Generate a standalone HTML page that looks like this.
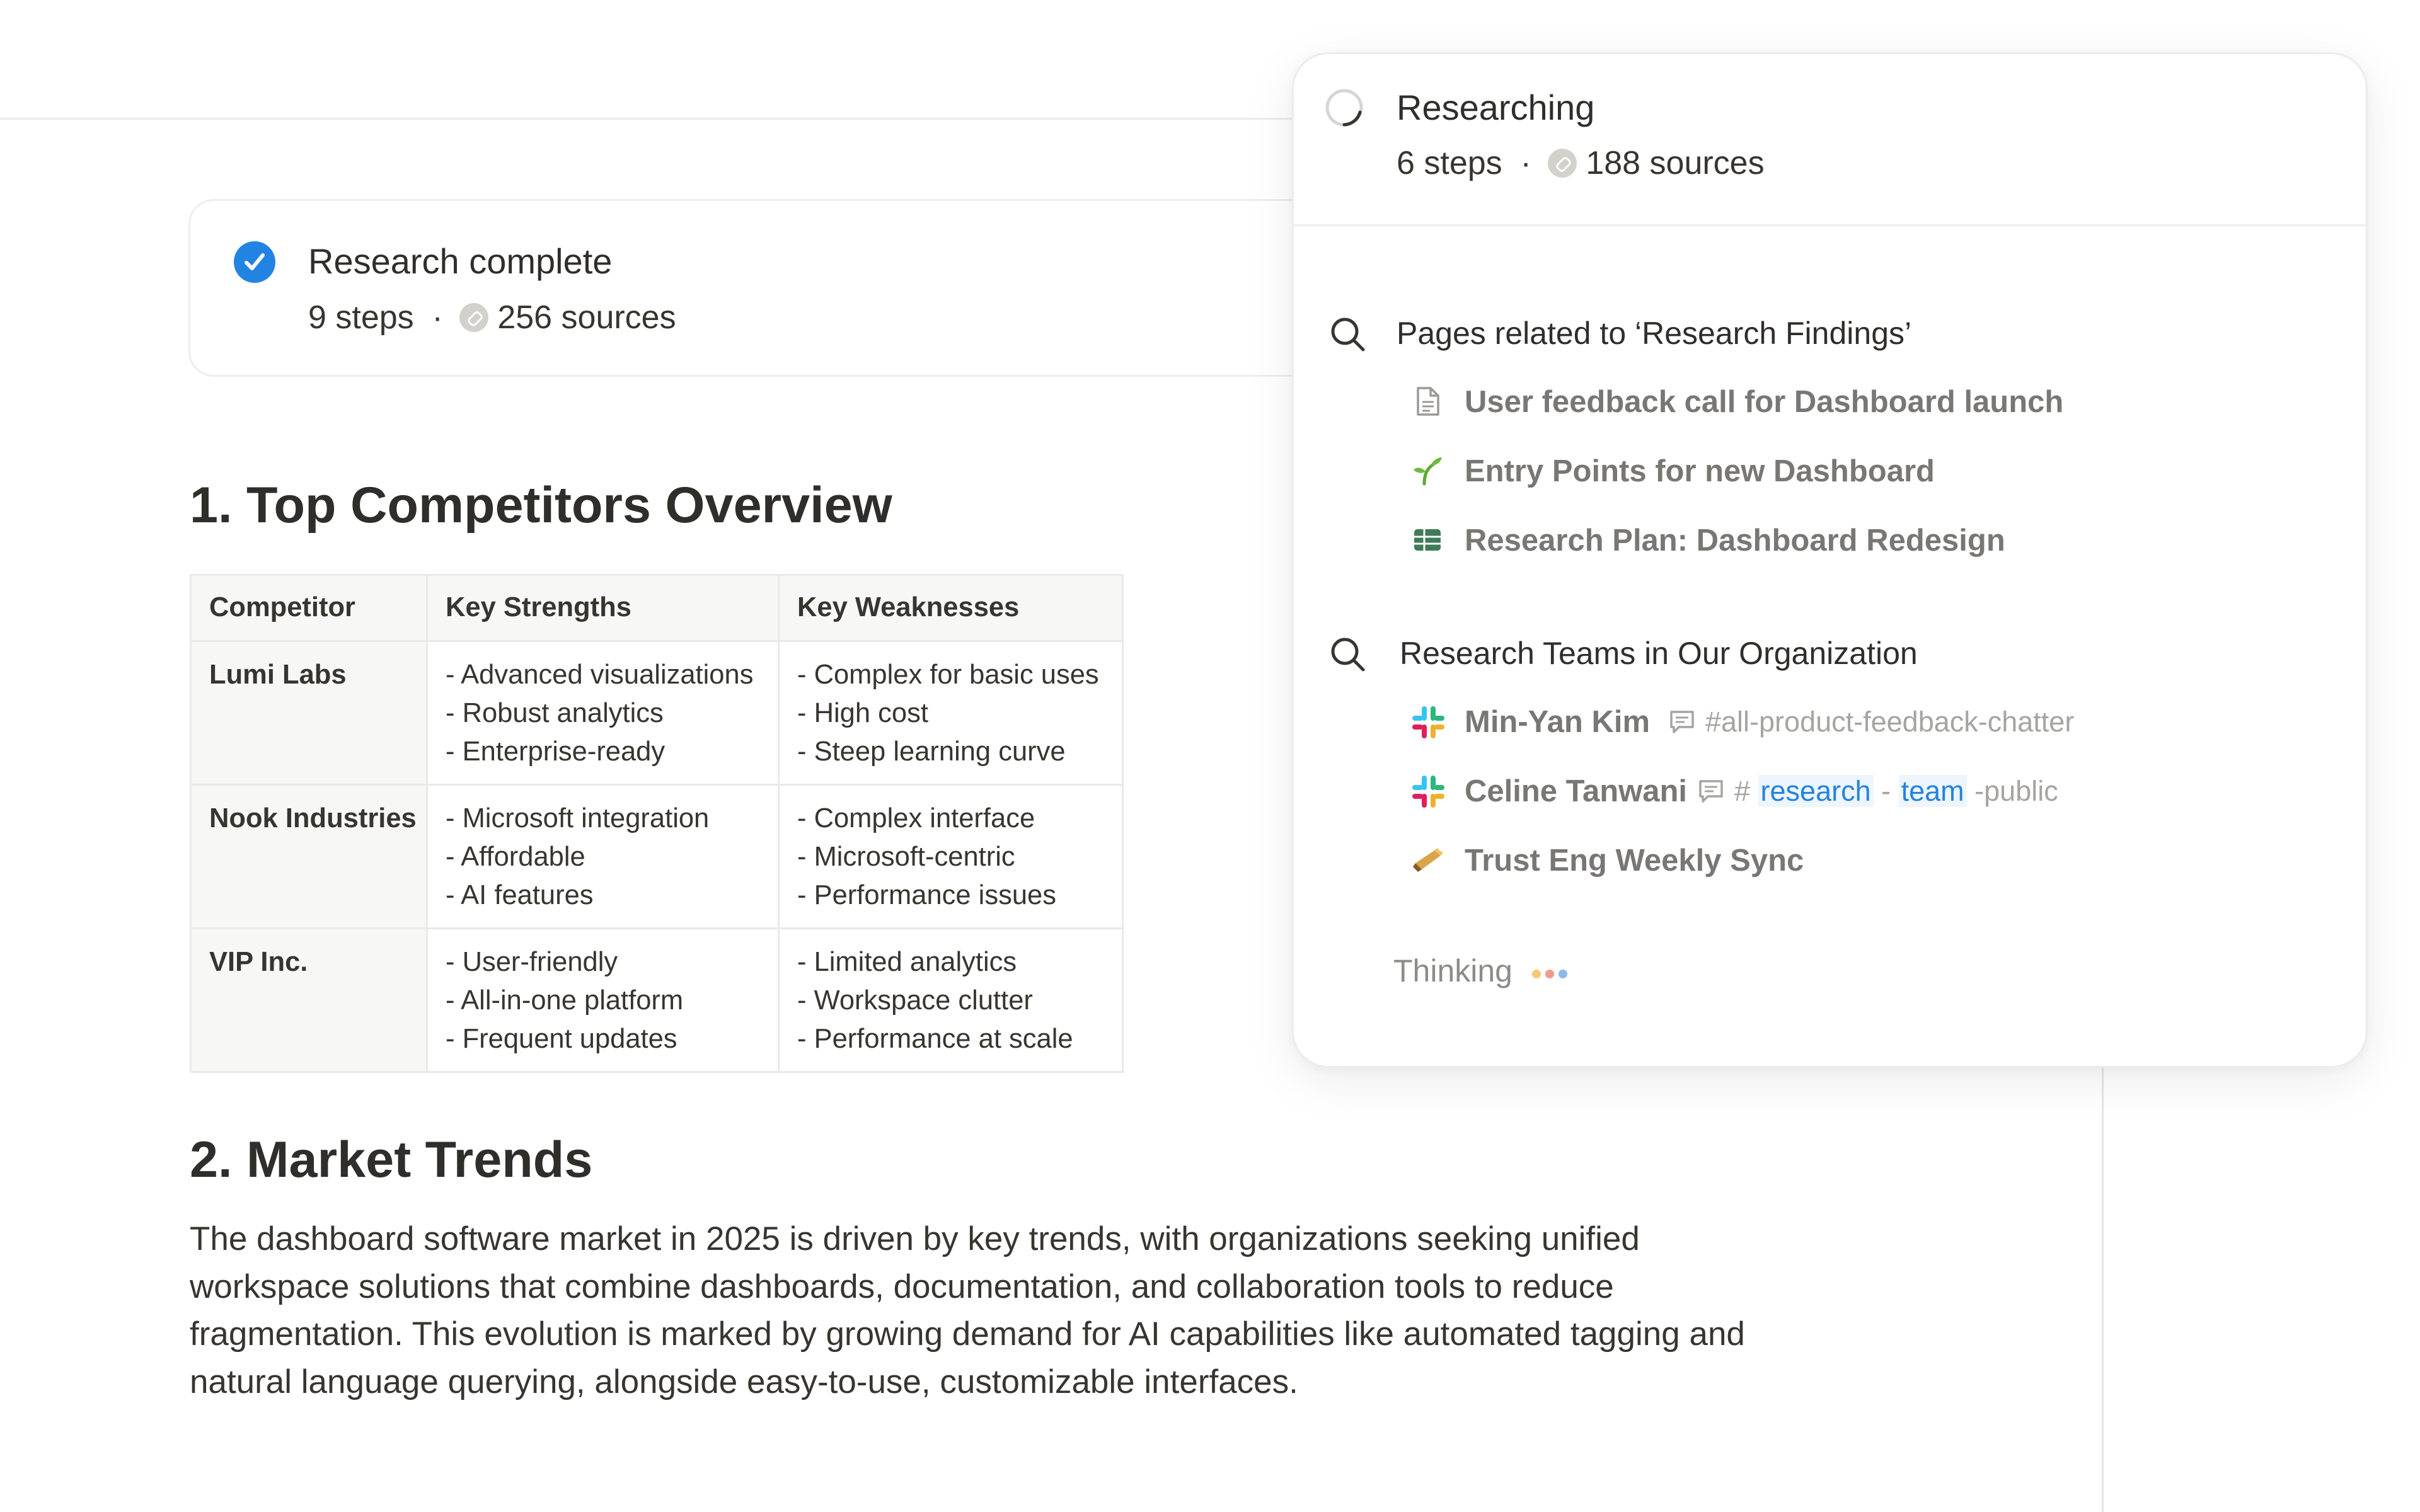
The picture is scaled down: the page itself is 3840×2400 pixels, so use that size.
<!DOCTYPE html>
<html><head><meta charset="utf-8"><style>
*{margin:0;padding:0;box-sizing:border-box}
body{width:3840px;height:2400px;background:#fff;font-family:"Liberation Sans",sans-serif;color:#37352f;position:relative;overflow:hidden}
.abs{position:absolute;white-space:nowrap}
.hl{position:absolute;left:0;top:187px;width:3336px;height:3px;background:#ebebea}
.vl{position:absolute;left:3335px;top:1690px;width:3px;height:710px;background:#e6e6e6;box-shadow:8px 0 40px rgba(0,0,0,0.04)}
.card{position:absolute;left:299px;top:316px;width:1900px;height:282px;border:3px solid #ededec;border-radius:40px;background:#fff}
.t1{font-size:56px;color:#2f2e2b}
.t2{font-size:52px;color:#37352f}
.link{display:inline-block;width:46px;height:46px;border-radius:50%;background:#d3d1cb;vertical-align:-6px;margin:0 14px 0 12px;position:relative}
.link:after{content:"";position:absolute;left:13px;top:17px;width:18px;height:10px;border:3px solid #fff;border-radius:6px;transform:rotate(-45deg)}
h1{position:absolute;font-size:81px;font-weight:bold;color:#2f2e2b;white-space:nowrap}
table{position:absolute;left:301px;top:911px;border-collapse:collapse;font-size:43.5px;color:#37352f;table-layout:fixed;width:1479px}
td{border:3px solid #e9e9e7;vertical-align:top;padding:22px 28px 0 28px;line-height:61px;white-space:nowrap}
tr.h td{background:#f7f7f5;font-weight:bold;height:105px;padding-top:20px}
tr.r td{height:228px}
td.c{background:#f7f7f5;font-weight:bold}
.p{position:absolute;left:301px;font-size:53px;color:#37352f;white-space:nowrap}
.pop{position:absolute;left:2050px;top:83px;width:1707px;height:1612px;background:#fff;border:3px solid #ececeb;border-radius:58px;box-shadow:0 20px 80px rgba(0,0,0,0.08),0 4px 16px rgba(0,0,0,0.04)}
.div{position:absolute;left:2050px;top:356px;width:1707px;height:3px;background:#efefee}
.q{font-size:50px;color:#2f2e2b}
.it{font-size:49px;color:#787774;font-weight:bold}
.mut{font-size:45px;color:#a5a4a0}
.blue{color:#2383e2;background:#eef5fd;padding:0 4px}
</style></head><body>
<div class="hl"></div>
<div class="vl"></div>

<div class="card"></div>
<svg class="abs" style="left:370px;top:382px" width="68" height="68"><circle cx="34" cy="34" r="33" fill="#2383e2"/><path d="M21 35 L30 44 L47 23" stroke="#fff" stroke-width="6" fill="none" stroke-linecap="round" stroke-linejoin="round"/></svg>
<div class="abs t1" style="left:489px;top:382px">Research complete</div>
<div class="abs t2" style="left:489px;top:474px">9 steps &nbsp;·&nbsp;<span class="link"></span>256 sources</div>

<h1 style="left:301px;top:756px">1. Top Competitors Overview</h1>

<table>
<colgroup><col style="width:375px"><col style="width:558px"><col style="width:546px"></colgroup>
<tr class="h"><td>Competitor</td><td>Key Strengths</td><td>Key Weaknesses</td></tr>
<tr class="r"><td class="c">Lumi Labs</td><td>- Advanced visualizations<br>- Robust analytics<br>- Enterprise-ready</td><td>- Complex for basic uses<br>- High cost<br>- Steep learning curve</td></tr>
<tr class="r"><td class="c">Nook Industries</td><td>- Microsoft integration<br>- Affordable<br>- AI features</td><td>- Complex interface<br>- Microsoft-centric<br>- Performance issues</td></tr>
<tr class="r"><td class="c">VIP Inc.</td><td>- User-friendly<br>- All-in-one platform<br>- Frequent updates</td><td>- Limited analytics<br>- Workspace clutter<br>- Performance at scale</td></tr>
</table>

<h1 style="left:301px;top:1795px">2. Market Trends</h1>
<div class="p" style="top:1936px">The dashboard software market in 2025 is driven by key trends, with organizations seeking unified</div>
<div class="p" style="top:2012px">workspace solutions that combine dashboards, documentation, and collaboration tools to reduce</div>
<div class="p" style="top:2087px">fragmentation. This evolution is marked by growing demand for AI capabilities like automated tagging and</div>
<div class="p" style="top:2163px">natural language querying, alongside easy-to-use, customizable interfaces.</div>

<div class="pop"></div>
<div class="div"></div>
<svg class="abs" style="left:2100px;top:138px" width="66" height="66"><circle cx="33" cy="33" r="27" stroke="#d6d5d2" stroke-width="5" fill="none"/><path d="M33 60 A27 27 0 0 0 58 40" stroke="#37352f" stroke-width="5" fill="none" stroke-linecap="round"/></svg>
<div class="abs t1" style="left:2216px;top:138px">Researching</div>
<div class="abs t2" style="left:2216px;top:229px">6 steps &nbsp;·&nbsp;<span class="link"></span>188 sources</div>

<svg class="abs" style="left:2108px;top:500px" width="62" height="62"><circle cx="26" cy="26" r="19" stroke="#37352f" stroke-width="5" fill="none"/><path d="M40 40 L55 55" stroke="#37352f" stroke-width="5" stroke-linecap="round"/></svg>
<div class="abs q" style="left:2216px;top:500px">Pages related to ‘Research Findings’</div>

<svg class="abs" style="left:2244px;top:612px" width="44" height="50"><path d="M6 4 H26 L38 16 V46 H6 Z M26 4 V16 H38" stroke="#9b9a97" stroke-width="3.5" fill="none" stroke-linejoin="round"/><path d="M13 26 H31 M13 33 H31 M13 40 H25" stroke="#9b9a97" stroke-width="3"/></svg>
<div class="abs it" style="left:2324px;top:610px">User feedback call for Dashboard launch</div>
<svg class="abs" style="left:2240px;top:722px" width="50" height="50"><path d="M20 46 C20 30 24 20 42 10" stroke="#5aa832" stroke-width="5" fill="none" stroke-linecap="round"/><path d="M22 26 C14 18 6 20 3 24 C10 30 18 30 22 26 Z" fill="#6cbd3c"/><path d="M30 16 C36 6 44 4 48 4 C46 12 38 18 30 16Z" fill="#6cbd3c"/></svg>
<div class="abs it" style="left:2324px;top:720px">Entry Points for new Dashboard</div>
<svg class="abs" style="left:2242px;top:838px" width="46" height="40"><rect x="2" y="2" width="42" height="34" rx="5" fill="#3f7b57"/><path d="M2 14 H44 M2 25 H44 M18 2 V36" stroke="#fff" stroke-width="3"/></svg>
<div class="abs it" style="left:2324px;top:830px">Research Plan: Dashboard Redesign</div>

<svg class="abs" style="left:2108px;top:1008px" width="62" height="62"><circle cx="26" cy="26" r="19" stroke="#37352f" stroke-width="5" fill="none"/><path d="M40 40 L55 55" stroke="#37352f" stroke-width="5" stroke-linecap="round"/></svg>
<div class="abs q" style="left:2221px;top:1008px">Research Teams in Our Organization</div>

<svg class="abs" style="left:2240px;top:1120px" width="54" height="54"><g stroke-linecap="round" stroke-width="8"><path d="M20 5 V20 M5 20 H14" stroke="#36c5f0"/><path d="M34 5 V20 M40 20 H48" stroke="#2eb67d"/><path d="M34 34 V48 M40 34 H48" stroke="#ecb22e"/><path d="M20 34 V48 M5 34 H14" stroke="#e01e5a"/></g></svg>
<div class="abs it" style="left:2324px;top:1118px">Min-Yan Kim</div>
<svg class="abs" style="left:2648px;top:1126px" width="42" height="40"><path d="M4 4 H38 V28 H16 L8 36 V28 H4 Z" stroke="#a5a4a0" stroke-width="3.5" fill="none" stroke-linejoin="round"/><path d="M11 13 H31 M11 20 H25" stroke="#a5a4a0" stroke-width="3"/></svg>
<div class="abs mut" style="left:2706px;top:1120px">#all-product-feedback-chatter</div>

<svg class="abs" style="left:2240px;top:1230px" width="54" height="54"><g stroke-linecap="round" stroke-width="8"><path d="M20 5 V20 M5 20 H14" stroke="#36c5f0"/><path d="M34 5 V20 M40 20 H48" stroke="#2eb67d"/><path d="M34 34 V48 M40 34 H48" stroke="#ecb22e"/><path d="M20 34 V48 M5 34 H14" stroke="#e01e5a"/></g></svg>
<div class="abs it" style="left:2324px;top:1228px">Celine Tanwani</div>
<svg class="abs" style="left:2694px;top:1236px" width="42" height="40"><path d="M4 4 H38 V28 H16 L8 36 V28 H4 Z" stroke="#a5a4a0" stroke-width="3.5" fill="none" stroke-linejoin="round"/><path d="M11 13 H31 M11 20 H25" stroke="#a5a4a0" stroke-width="3"/></svg>
<div class="abs mut" style="left:2752px;top:1230px"># <span class="blue">research</span> - <span class="blue">team</span> -public</div>

<svg class="abs" style="left:2240px;top:1340px" width="54" height="50"><path d="M6 30 L36 10 L46 18 L16 40 Z" fill="#d9a44a"/><path d="M6 30 L16 40 L10 44 L2 36 Z" fill="#8a5a22"/><path d="M36 10 L46 18 L50 14 L40 6Z" fill="#f0c36a"/></svg>
<div class="abs it" style="left:2324px;top:1338px">Trust Eng Weekly Sync</div>

<div class="abs" style="left:2211px;top:1512px;font-size:50px;color:#8d8c88">Thinking</div>
<svg class="abs" style="left:2428px;top:1536px" width="70" height="20"><circle cx="10" cy="10" r="7" fill="#f5c87a"/><circle cx="31" cy="10" r="7" fill="#f09a8e"/><circle cx="52" cy="10" r="7" fill="#8fb8ec"/></svg>
</body></html>
